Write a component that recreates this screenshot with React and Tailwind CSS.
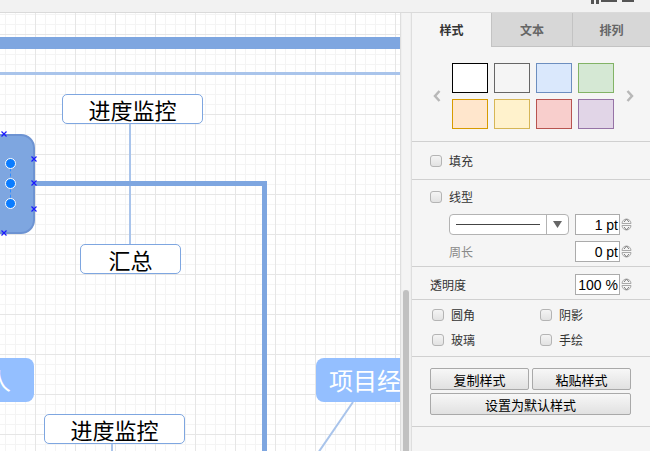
import React from "react";

const CJK = "font-['Noto_Sans_CJK_SC',sans-serif]";
const LAT = "font-['Liberation_Sans','Noto_Sans_CJK_SC',sans-serif]";

function Handle({ x, y }) {
  return (
    <svg className="absolute" style={{ left: x - 3, top: y - 3 }} width="6" height="6" viewBox="0 0 6 6">
      <path d="M0.5 0.5L5.5 5.5M5.5 0.5L0.5 5.5" stroke="#1a1aff" strokeWidth="1.2" />
    </svg>
  );
}

function Box({ className, children }) {
  return (
    <div className={`absolute flex items-center justify-center bg-white border border-[#7ea6e0] rounded-[5px] text-[22px] leading-none text-black ${CJK} ${className}`}>
      {children}
    </div>
  );
}

function Canvas() {
  return (
    <div className="relative w-[400px] h-full overflow-hidden bg-white bg-[linear-gradient(to_right,#e6e6e6_1px,transparent_1px),linear-gradient(to_bottom,#e6e6e6_1px,transparent_1px),linear-gradient(to_right,#f4f4f4_1px,transparent_1px),linear-gradient(to_bottom,#f4f4f4_1px,transparent_1px)] bg-[length:40px_40px,40px_40px,10px_10px,10px_10px] bg-[position:35px_21px,35px_21px,5px_1px,5px_1px]">
      {/* thick top bar */}
      <div className="absolute left-0 right-0 top-[24px] h-[12px] bg-[#7ea6e0]" />
      <div className="absolute left-0 right-0 top-[59px] h-[3px] bg-[#a9c4eb]" />

      {/* 进度监控 -> 汇总 */}
      <div className="absolute left-[129px] top-[111px] w-[2px] h-[120px] bg-[#a9c4eb]" />
      <Box className="left-[62px] top-[81px] w-[141px] h-[30px]">进度监控</Box>
      <Box className="left-[80px] top-[231px] w-[101px] h-[30px]">汇总</Box>

      {/* thick connector */}
      <div className="absolute left-[34px] top-[168px] w-[233px] h-[5px] bg-[#7ea6e0]" />
      <div className="absolute left-[262px] top-[168px] w-[5px] h-[280px] bg-[#7ea6e0]" />

      {/* selected node */}
      <div className="absolute left-[-60px] top-[121px] w-[95px] h-[100px] rounded-[14px] bg-[#7ea6e0] border-2 border-[#6d93d2]" />
      <div className="absolute left-[10px] top-[150px] h-[40px] border-l border-dashed border-[#2f8cff]" />
      {[150, 170, 190].map((y) => (
        <div key={y} className="absolute left-[5px] w-[11px] h-[11px] rounded-full bg-[#0a7cff] border-[1.5px] border-white" style={{ top: y - 5.5 }} />
      ))}
      <Handle x={4} y={121} />
      <Handle x={34} y={146} />
      <Handle x={34} y={170} />
      <Handle x={34} y={196} />
      <Handle x={4} y={220} />

      {/* 负责人 node */}
      <div className={`absolute left-[-84px] top-[345px] w-[118px] h-[44px] rounded-[8px] bg-[#94bfff] flex items-center justify-center text-white text-[24px] leading-none ${CJK}`}>
        负责人
      </div>

      {/* 进度监控 2 */}
      <Box className="left-[44px] top-[401px] w-[141px] h-[30px]">进度监控</Box>
      <div className="absolute left-[111px] top-[431px] w-[2px] h-[10px] bg-[#a9c4eb]" />

      {/* 项目经理 node */}
      <svg className="absolute left-0 top-0" width="400" height="438">
        <line x1="353" y1="389" x2="318" y2="440" stroke="#a9c4eb" strokeWidth="2" />
      </svg>
      <div className={`absolute left-[316px] top-[345px] w-[122px] h-[44px] rounded-[8px] bg-[#94bfff] flex items-center justify-center text-white text-[24px] leading-none ${CJK}`}>
        项目经理
      </div>
    </div>
  );
}

function Check({ label, gray }) {
  return (
    <div className="flex items-center gap-[7px]">
      <div className="w-[12px] h-[12px] rounded-[3px] border border-[#b4b4b4] bg-[linear-gradient(#f4f4f4,#e2e2e2)]" />
      <span className={`text-[12px] leading-none ${gray ? "text-[#888]" : "text-[#333]"}`}>{label}</span>
    </div>
  );
}

function Spinner() {
  return (
    <svg width="11" height="21" viewBox="0 0 11 21" className="ml-[1px]">
      <path d="M1 9.5 A4.5 4.5 0 0 1 10 9.5 Z" fill="#f4f4f4" stroke="#a8a8a8" strokeWidth="1" />
      <path d="M1 11.5 A4.5 4.5 0 0 0 10 11.5 Z" fill="#f4f4f4" stroke="#a8a8a8" strokeWidth="1" />
      <path d="M3 8 L5.5 5 L8 8" fill="none" stroke="#7a7a7a" strokeWidth="1" />
      <path d="M3 13 L5.5 16 L8 13" fill="none" stroke="#7a7a7a" strokeWidth="1" />
    </svg>
  );
}

function NumInput({ value }) {
  return (
    <div className="flex items-center">
      <div className={`w-[45px] h-[21px] bg-white border border-[#ababab] flex items-center justify-end pr-[1px] text-[14px] leading-none text-black ${LAT}`}>
        {value}
      </div>
      <Spinner />
    </div>
  );
}

function Btn({ children, className = "" }) {
  return (
    <div className={`h-[22px] rounded-[2px] border border-[#a9a9a9] bg-[linear-gradient(#f7f7f7,#e1e1e1)] flex items-center justify-center text-[13px] leading-none text-black ${className}`}>
      {children}
    </div>
  );
}

function Chevron({ dir }) {
  return (
    <svg width="8" height="12" viewBox="0 0 8 12">
      <path d={dir === "l" ? "M6.5 1 L2 6 L6.5 11" : "M1.5 1 L6 6 L1.5 11"} fill="none" stroke="#b8b8b8" strokeWidth="2.5" />
    </svg>
  );
}

const swatches = [
  ["#ffffff", "#000000"],
  ["#f5f5f5", "#666666"],
  ["#dae8fc", "#6c8ebf"],
  ["#d5e8d4", "#82b366"],
  ["#ffe6cc", "#d79b00"],
  ["#fff2cc", "#d6b656"],
  ["#f8cecc", "#b85450"],
  ["#e1d5e7", "#9673a6"],
];

function Panel() {
  return (
    <div className={`w-[238px] h-full bg-[#f5f5f5] flex flex-col ${CJK}`}>
      {/* tabs */}
      <div className="h-[34px] flex text-[12px] font-bold shrink-0">
        <div className="w-[80px] flex items-center justify-center text-[#333] border-r border-[#c3c3c3]">样式</div>
        <div className="w-[81px] flex items-center justify-center text-[#666] bg-[#d7d7d7] border-r border-b border-[#c3c3c3]">文本</div>
        <div className="flex-1 flex items-center justify-center text-[#666] bg-[#d7d7d7] border-b border-[#c3c3c3]">排列</div>
      </div>
      {/* swatches */}
      <div className="h-[95px] shrink-0 border-b border-[#d0d0d0] flex items-start pt-[16px]">
        <div className="flex items-center pl-[21px] h-[65px]">
          <Chevron dir="l" />
          <div className="ml-[11px] grid grid-cols-[repeat(4,36px)] grid-rows-[30px_30px] gap-[6px]">
            {swatches.map(([bg, bd]) => (
              <div key={bg} className="border" style={{ background: bg, borderColor: bd }} />
            ))}
          </div>
          <div className="ml-[12px]"><Chevron dir="r" /></div>
        </div>
      </div>
      {/* fill */}
      <div className="h-[38px] shrink-0 border-b border-[#d0d0d0] flex items-center pl-[18px]">
        <Check label="填充" />
      </div>
      {/* line */}
      <div className="h-[87px] shrink-0 border-b border-[#d0d0d0] flex flex-col pt-[10px]">
        <div className="pl-[18px] h-[14px] flex items-center"><Check label="线型" /></div>
        <div className="mt-[10px] flex items-center pl-[37px]">
          <div className="w-[120px] h-[21px] rounded-[4px] border border-[#b3b3b3] bg-white flex items-center">
            <div className="w-[96px] flex items-center px-[6px]"><div className="w-full h-[1px] bg-[#444]" /></div>
            <div className="flex-1 h-full border-l border-[#b3b3b3] flex items-center justify-center">
              <svg width="9" height="7" viewBox="0 0 9 7"><path d="M0 0 H9 L4.5 7 Z" fill="#666" /></svg>
            </div>
          </div>
          <div className="ml-[6px]"><NumInput value="1 pt" /></div>
        </div>
        <div className="mt-[6px] flex items-center pl-[37px]">
          <span className="w-[126px] text-[12px] text-[#888] leading-none">周长</span>
          <NumInput value="0 pt" />
        </div>
      </div>
      {/* opacity */}
      <div className="h-[33px] shrink-0 border-b border-[#d0d0d0] flex items-center pl-[18px] pt-[3px]">
        <span className="w-[145px] text-[12px] text-[#333] leading-none">透明度</span>
        <NumInput value="100 %" />
      </div>
      {/* checkboxes */}
      <div className="h-[57px] shrink-0 border-b border-[#d0d0d0] pt-[9px] pl-[20px] grid grid-cols-[108px_108px] grid-rows-[12px_12px] gap-y-[13px]">
        <Check label="圆角" />
        <Check label="阴影" />
        <Check label="玻璃" />
        <Check label="手绘" />
      </div>
      {/* buttons */}
      <div className="h-[70px] shrink-0 border-b border-[#d0d0d0] pt-[11px] pl-[18px]">
        <div className="w-[201px] grid grid-cols-2 gap-[3px]">
          <Btn>复制样式</Btn>
          <Btn>粘贴样式</Btn>
          <Btn className="col-span-2">设置为默认样式</Btn>
        </div>
      </div>
    </div>
  );
}

export default function App() {
  return (
    <div className="w-[650px] h-[451px] overflow-hidden flex flex-col bg-[#f2f2f2]">
      <div className="relative h-[13px] shrink-0 bg-[#f2f2f2] border-b border-[#dadada]">
        <div className="absolute left-[591px] top-0 w-[3px] h-[4px] bg-[#555]" />
        <div className="absolute left-[596px] top-0 w-[3px] h-[4px] bg-[#555]" />
        <div className="absolute left-[601px] top-0 w-[16px] h-[2px] bg-[#555]" />
        <div className="absolute left-[622px] top-0 w-[12px] h-[2px] bg-[#555]" />
      </div>
      <div className="flex flex-1 min-h-0">
        <Canvas />
        <div className="w-[12px] h-full bg-[#efefef] border-l border-r border-[#dedede] flex flex-col">
          <div className="h-[277px] shrink-0 mx-[1px] bg-[#f4f4f4]" />
          <div className="flex-1 w-[6px] mx-auto rounded-t-[3px] bg-[#c1c1c1]" />
        </div>
        <Panel />
      </div>
    </div>
  );
}
